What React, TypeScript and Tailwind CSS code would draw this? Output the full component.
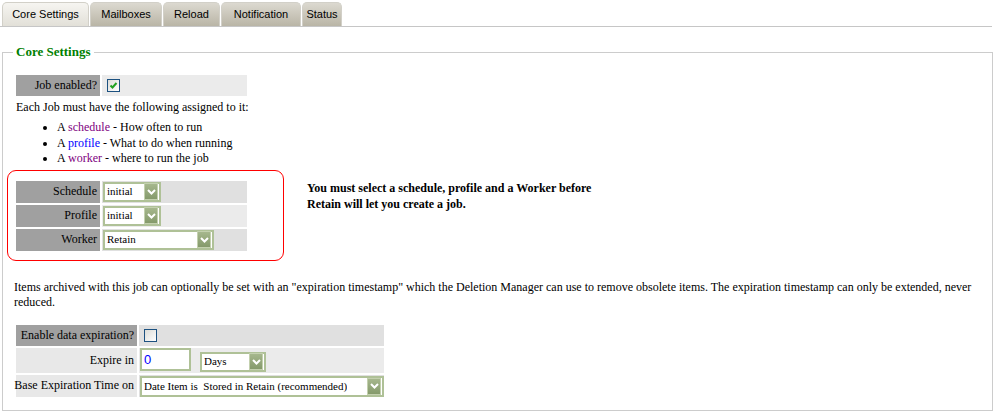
import React from "react";

const tabs = [
  { label: "Core Settings", w: "w-[87px]", active: true },
  { label: "Mailboxes", w: "w-[72px]" },
  { label: "Reload", w: "w-[57px]" },
  { label: "Notification", w: "w-[80px]" },
  { label: "Status", w: "w-[40px]" },
];

function Arrow() {
  return (
    <span className="flex h-[17px] w-[14px] items-center justify-center border border-[#c3d0ae] bg-gradient-to-b from-[#a6b78d] to-[#859a6b]">
      <svg width="9" height="6" viewBox="0 0 9 6">
        <polyline points="1,1 4.5,4.5 8,1" fill="none" stroke="#fff" strokeWidth="2" />
      </svg>
    </span>
  );
}

function Select({ value, className }: { value: string; className: string }) {
  return (
    <div className={`flex items-center justify-between border-2 border-[#afc197] bg-white pl-[2px] pr-[1px] text-[11px] leading-none ${className}`}>
      <span className="truncate whitespace-pre">{value}</span>
      <Arrow />
    </div>
  );
}

function Checkbox({ checked }: { checked?: boolean }) {
  return (
    <span className="flex h-[13px] w-[13px] items-center justify-center border border-[#1c5180] bg-gradient-to-br from-[#dcdcd7] to-white">
      {checked && (
        <svg width="9" height="9" viewBox="0 0 9 9">
          <polyline points="1.5,4.5 3.5,6.5 7.5,2" fill="none" stroke="#21a121" strokeWidth="2" />
        </svg>
      )}
    </span>
  );
}

function Label({ children, bg }: { children: React.ReactNode; bg: string }) {
  return <div className={`flex items-center justify-end whitespace-nowrap pr-[3px] ${bg}`}>{children}</div>;
}

export default function App() {
  return (
    <div className="h-[413px] w-[1003px] overflow-hidden bg-white font-['Liberation_Serif','Times_New_Roman',serif] text-[12px] leading-[15px] text-black">
      {/* tab strip */}
      <div className="mr-[11px] flex gap-px border-b border-[#c6c6c6] pl-[2px] pt-[2px]">
        {tabs.map((t) => (
          <div
            key={t.label}
            className={`flex h-[24px] items-center justify-center rounded-t-[5px] border border-b-0 border-[#d2d0c8] font-['Liberation_Sans',Arial,sans-serif] text-[11px] ${t.w} ${
              t.active ? "bg-gradient-to-b from-[#f6f5f1] to-[#e2e0d8]" : "bg-gradient-to-b from-[#dcd9d0] to-[#b9b5a6]"
            }`}
          >
            {t.label}
          </div>
        ))}
      </div>

      <fieldset className="ml-[2px] mr-[10px] mt-[17px] border border-[#cccccc] pb-[13px] pl-[4px] pr-[8px]">
        <legend className="ml-[6px] px-[3px] text-[13px] font-bold leading-[16px] text-[#008000]">Core Settings</legend>

        <div className="ml-[9px] mt-[15px] grid w-[231px] grid-cols-[84px_145px] gap-x-[2px]">
          <Label bg="bg-[#a0a0a0]">
            <span className="h-[21px] leading-[21px]">Job enabled?</span>
          </Label>
          <div className="flex items-center bg-[#ebebeb] pl-[5px]">
            <Checkbox checked />
          </div>
        </div>

        <p className="ml-[9px] mt-[4px]">Each Job must have the following assigned to it:</p>
        <ul className="ml-[9px] mt-[5px] list-disc pl-[41px] leading-[15.5px]">
          <li>
            A <span className="text-[#800080]">schedule</span> - How often to run
          </li>
          <li>
            A <span className="text-[#0000ff]">profile</span> - What to do when running
          </li>
          <li>
            A <span className="text-[#800080]">worker</span> - where to run the job
          </li>
        </ul>

        <div className="mt-[3px] flex items-start">
          <div className="w-[277px] rounded-[9px] border border-[#ff0000] pb-[9px] pl-[8px] pt-[10px]">
            <div className="grid w-[231px] grid-cols-[84px_145px] gap-[2px] [grid-auto-rows:22px]">
              <Label bg="bg-[#a0a0a0]">Schedule</Label>
              <div className="bg-[#e0e0e0] pl-px pt-px">
                <Select value="initial" className="h-[20px] w-[58px]" />
              </div>
              <Label bg="bg-[#a0a0a0]">Profile</Label>
              <div className="bg-[#ebebeb] pl-px pt-px">
                <Select value="initial" className="h-[20px] w-[58px]" />
              </div>
              <Label bg="bg-[#a0a0a0]">Worker</Label>
              <div className="bg-[#e0e0e0] pl-px pt-px">
                <Select value="Retain" className="h-[20px] w-[111px]" />
              </div>
            </div>
          </div>
          <p className="ml-[23px] mt-[10px] font-bold leading-[16px]">
            You must select a schedule, profile and a Worker before
            <br />
            Retain will let you create a job.
          </p>
        </div>

        <p className="ml-[7px] mt-[19px]">
          Items archived with this job can optionally be set with an "expiration timestamp" which the Deletion Manager can use to remove obsolete items. The expiration timestamp can only be extended, never
          <br />
          reduced.
        </p>

        <div className="ml-[9px] mt-[15px] grid w-[368px] grid-cols-[121px_245px] grid-rows-[21px_25px_22px] gap-[2px]">
          <Label bg="bg-[#a0a0a0]">Enable data expiration?</Label>
          <div className="flex items-center bg-[#e0e0e0] pl-[5px]">
            <Checkbox />
          </div>

          <Label bg="bg-[#e8e8e8]">Expire in</Label>
          <div className="flex items-end bg-[#ebebeb] pb-[1px] pl-px">
            <div className="flex h-[23px] w-[51px] items-center self-start border-2 border-[#afc197] bg-white pl-[2px] font-['Liberation_Sans',Arial,sans-serif] text-[13px] text-[#0000ff]">
              0
            </div>
            <Select value="Days" className="ml-[9px] h-[20px] w-[66px]" />
          </div>

          <Label bg="bg-[#e8e8e8]">Base Expiration Time on</Label>
          <div className="bg-[#e0e0e0] pl-px pt-px">
            <Select value="Date Item is  Stored in Retain (recommended)" className="h-[21px] w-[244px]" />
          </div>
        </div>
      </fieldset>
    </div>
  );
}
